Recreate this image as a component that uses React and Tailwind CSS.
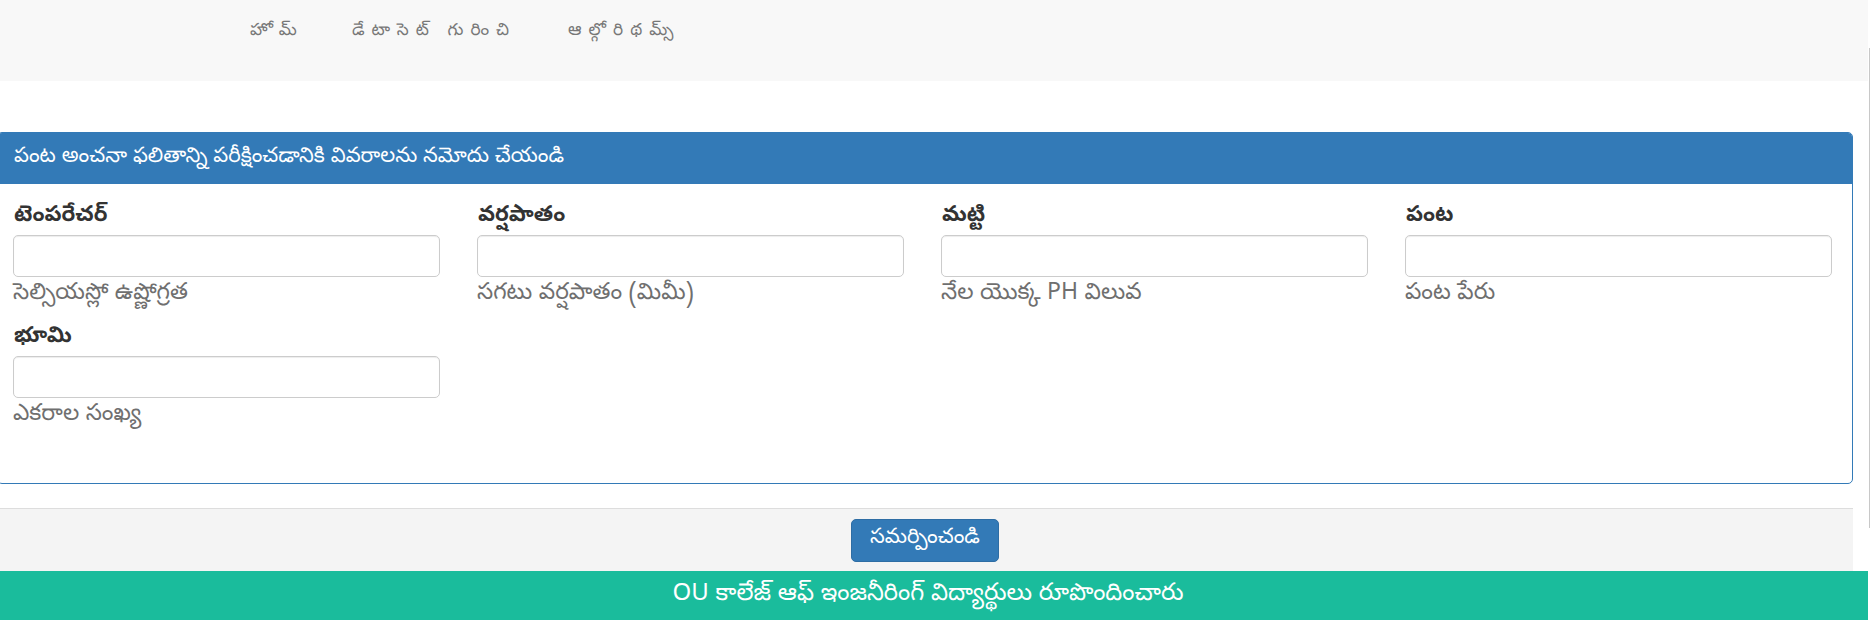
import React from "react";

const fields = [
  { label: "టెంపరేచర్", help: "సెల్సియస్లో ఉష్ణోగ్రత" },
  { label: "వర్షపాతం", help: "సగటు వర్షపాతం (మిమీ)" },
  { label: "మట్టి", help: "నేల యొక్క PH విలువ" },
  { label: "పంట", help: "పంట పేరు" },
  { label: "భూమి", help: "ఎకరాల సంఖ్య" },
];

const navLinks = [
  { text: "హోమ్", w: "w-[102px]" },
  { text: "డేటాసెట్ గురించి", w: "w-[216px]" },
  { text: "ఆల్గోరిథమ్స్", w: "w-[160px]" },
];

export default function App() {
  return (
    <div className="flex w-[1870px] h-[620px] overflow-hidden bg-white font-['Noto_Sans_Telugu','Noto_Sans',sans-serif] text-[#333]">
      <div className="w-[1868px] flex flex-col">
        {/* ---------- Navbar ---------- */}
        <nav className="shrink-0 h-[81px] bg-[#f8f8f8] flex items-start pl-[250px] pt-[18px]">
          {navLinks.map((link) => (
            <a
              key={link.text}
              className={`${link.w} shrink-0 text-[17px] leading-[28px] text-[#777] tracking-[7px] whitespace-nowrap`}
            >
              {link.text}
            </a>
          ))}
        </nav>

        {/* ---------- Panel ---------- */}
        <div className="shrink-0 mt-[51px] ml-[-3px] w-[1856px] border border-[#337ab7] rounded-[5px] bg-white">
          <div className="h-[51px] bg-[#337ab7] text-white text-[21px] flex items-center pl-[16px] rounded-t-[4px]">
            పంట అంచనా ఫలితాన్ని పరీక్షించడానికి వివరాలను నమోదు చేయండి
          </div>
          <div className="pl-[15px] pr-[20px] pt-[21px] pb-[53px] grid grid-cols-4 gap-x-[37px] gap-y-[17px]">
            {fields.map((f) => (
              <div key={f.label} className="flex flex-col">
                <label className="text-[22px] leading-[24px] font-bold text-[#333] pl-[1px]">
                  {f.label}
                </label>
                <input
                  type="text"
                  className="mt-[6px] h-[42px] w-full border border-[#ccc] rounded-[5px] shadow-[inset_0_1px_1px_rgba(0,0,0,0.075)] outline-none"
                />
                <span className="mt-[4px] text-[23px] leading-[28px] text-[#6f6f6f]">
                  {f.help}
                </span>
              </div>
            ))}
          </div>
        </div>

        {/* ---------- Submit bar ---------- */}
        <div className="shrink-0 mt-[24px] ml-[-3px] w-[1856px] h-[63px] bg-[#f4f4f4] border-t border-[#ddd] flex items-center justify-center">
          <button className="h-[43px] w-[148px] bg-[#337ab7] border border-[#2e6da4] rounded-[5px] text-white text-[21px]">
            సమర్పించండి
          </button>
        </div>

        {/* ---------- Footer ---------- */}
        <footer className="shrink-0 h-[50px] bg-[#1abc9c] text-white text-[24px] flex items-center justify-center pr-[12px]">
          OU కాలేజ్ ఆఫ్ ఇంజనీరింగ్ విద్యార్థులు రూపొందించారు
        </footer>
      </div>

      {/* scrollbar strip */}
      <div className="w-[2px] bg-white flex flex-col pt-[48px]">
        <div className="h-[480px] w-[1px] ml-[1px] bg-[#c8c8c8]" />
      </div>
    </div>
  );
}
